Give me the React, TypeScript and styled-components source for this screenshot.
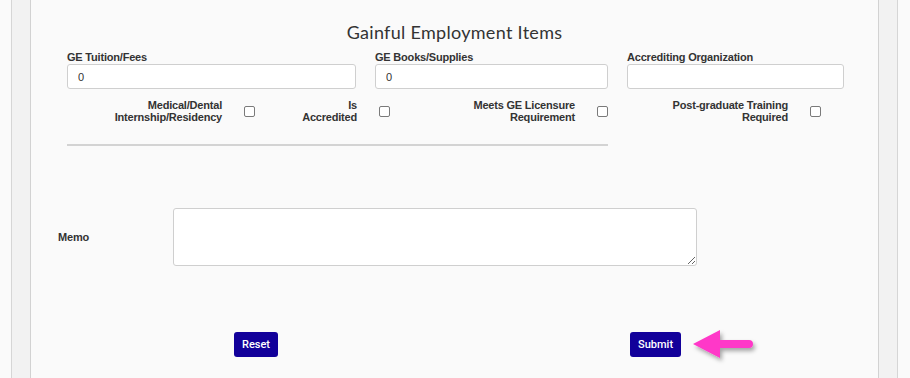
import React from 'react';
import styled, { createGlobalStyle } from 'styled-components';

const GlobalStyle = createGlobalStyle`
  html, body {
    margin: 0;
    padding: 0;
    background: #fafafa;
    font-family: "Liberation Sans", Arial, sans-serif;
    color: #333;
  }
`;

const Frame = styled.div`
  margin-left: 11px;
  width: 887px;
  min-height: 378px;
  padding: 0 18px;
  box-sizing: border-box;
  border-left: 1px solid #d6d6d6;
  border-right: 1px solid #d6d6d6;
  background: #f2f2f2;
  display: flex;
`;

const Card = styled.div`
  flex: 1;
  border-left: 1px solid #d2d2d2;
  border-right: 1px solid #d2d2d2;
  background: #fafafa;
  padding-top: 21px;
`;

const Title = styled.h2`
  margin: 0 0 8px;
  font-family: "Lato", "Open Sans", sans-serif;
  font-weight: 400;
  font-size: 18px;
  line-height: 22px;
  letter-spacing: 0.3px;
  text-align: center;
  color: #333;
`;

const FieldGrid = styled.div`
  display: grid;
  grid-template-columns: 289px 233px 217px;
  column-gap: 19px;
  padding-left: 36px;
`;

const Field = styled.div`
  display: flex;
  flex-direction: column;
`;

const Label = styled.label`
  font-size: 11px;
  font-weight: 700;
  line-height: 13px;
  letter-spacing: -0.2px;
  color: #333;
`;

const TextInput = styled.input`
  height: 25px;
  box-sizing: border-box;
  border: 1px solid #cfcfcf;
  border-radius: 3px;
  background: #fff;
  padding: 0 10px;
  font-family: "Liberation Sans", Arial, sans-serif;
  font-size: 11px;
  color: #333;
  outline: none;
`;

const CheckRow = styled.div`
  display: flex;
  align-items: center;
  margin-top: 10px;
  padding-left: 36px;
`;

const CheckText = styled.span<{ $w: number }>`
  width: ${(p) => p.$w}px;
  text-align: right;
  font-size: 11px;
  font-weight: 700;
  line-height: 12px;
  letter-spacing: -0.2px;
  color: #333;
`;

const Check = styled.input.attrs({ type: 'checkbox' })`
  appearance: none;
  width: 11px;
  height: 11px;
  margin: 0 0 0 22px;
  border: 1px solid #7a7a7a;
  border-radius: 2px;
  background: #fff;
  box-sizing: border-box;
`;

const Rule = styled.hr`
  width: 541px;
  margin: 21px 0 0 36px;
  border: none;
  height: 2px;
  background: #d3d3d3;
`;

const MemoRow = styled.div`
  display: grid;
  grid-template-columns: 115px 524px;
  align-items: center;
  margin-top: 62px;
  padding-left: 27px;
`;

const MemoArea = styled.textarea`
  height: 58px;
  box-sizing: border-box;
  border: 1px solid #cfcfcf;
  border-radius: 3px;
  background: #fff;
  outline: none;
`;

const ButtonRow = styled.div`
  display: flex;
  align-items: center;
  gap: 352px;
  margin-top: 66px;
  padding-left: 203px;
`;

const ButtonWrap = styled.div`
  position: relative;
`;

const Button = styled.button`
  height: 25px;
  padding: 0 8px;
  border: none;
  border-radius: 3px;
  background: #12009a;
  color: #fff;
  font-family: Roboto, "Liberation Sans", Arial, sans-serif;
  font-size: 11px;
  font-weight: 500;
`;

const Pointer = styled.svg`
  position: absolute;
  left: 61px;
  top: -7px;
`;

const checks = [
  { text: ['Medical/Dental', 'Internship/Residency'], w: 155 },
  { text: ['Is', 'Accredited'], w: 102 },
  { text: ['Meets GE Licensure', 'Requirement'], w: 185 },
  { text: ['Post-graduate Training', 'Required'], w: 180 },
];

const App = () => {
  return (
    <>
      <GlobalStyle />
      <Frame>
        <Card>
          <Title>Gainful Employment Items</Title>
          <FieldGrid>
            <Field>
              <Label>GE Tuition/Fees</Label>
              <TextInput defaultValue="0" />
            </Field>
            <Field>
              <Label>GE Books/Supplies</Label>
              <TextInput defaultValue="0" />
            </Field>
            <Field>
              <Label>Accrediting Organization</Label>
              <TextInput defaultValue="" />
            </Field>
          </FieldGrid>
          <CheckRow>
            {checks.map((c) => (
              <React.Fragment key={c.text.join('-')}>
                <CheckText $w={c.w}>
                  {c.text[0]}
                  <br />
                  {c.text[1]}
                </CheckText>
                <Check />
              </React.Fragment>
            ))}
          </CheckRow>
          <Rule />
          <MemoRow>
            <Label>Memo</Label>
            <MemoArea />
          </MemoRow>
          <ButtonRow>
            <Button>Reset</Button>
            <ButtonWrap>
              <Button>Submit</Button>
              <Pointer width="72" height="40" viewBox="0 0 72 40">
                <defs>
                  <filter id="sh" x="-20%" y="-20%" width="150%" height="160%">
                    <feDropShadow dx="2" dy="3" stdDeviation="2" floodColor="#000" floodOpacity="0.35" />
                  </filter>
                </defs>
                <g filter="url(#sh)">
                  <path d="M2 19 L29 5 L29 15 L58 15 A4 4 0 0 1 58 23 L29 23 L29 33 Z" fill="#ff38c8" />
                </g>
              </Pointer>
            </ButtonWrap>
          </ButtonRow>
        </Card>
      </Frame>
    </>
  );
};

export default App;
